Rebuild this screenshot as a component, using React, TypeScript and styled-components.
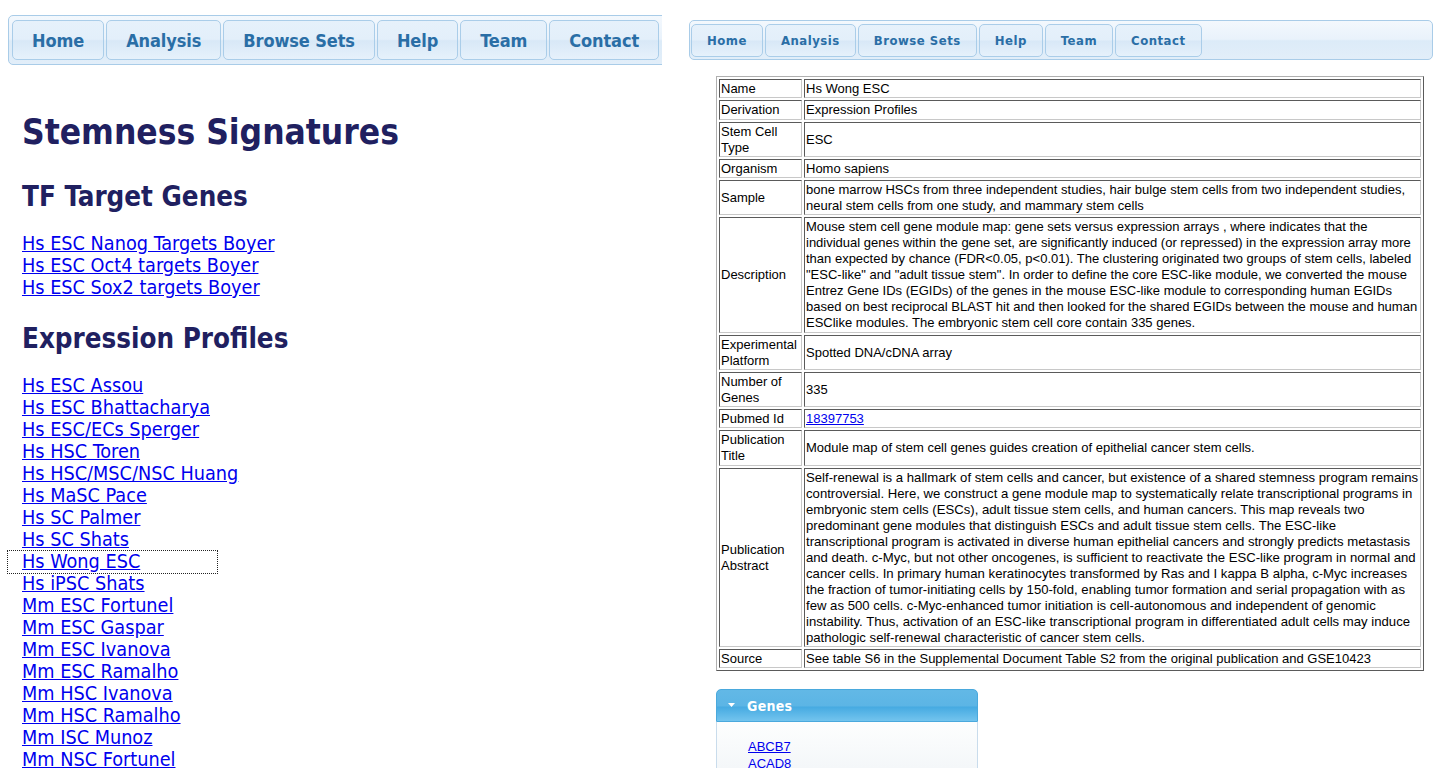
import React from "react";
import styled, { createGlobalStyle, css } from "styled-components";

const Global = createGlobalStyle`
  html, body { margin: 0; padding: 0; background: #fff; }
  body { overflow: hidden; }
`;

const Page = styled.div`
  display: flex;
  width: 1438px;
  height: 768px;
  overflow: hidden;
`;

const LeftPane = styled.div`
  width: 662px;
  flex: 0 0 662px;
  height: 768px;
  overflow: hidden;
  padding: 15px 0 0 8px;
  box-sizing: border-box;
  font-family: "DejaVu Sans Condensed", "DejaVu Sans", sans-serif;
  font-stretch: condensed;
`;

const RightPane = styled.div`
  flex: 1;
  height: 768px;
  overflow: hidden;
  padding: 20px 5px 0 8px;
  margin-left: 19px;
  box-sizing: border-box;
`;

const NavBar = styled.div<{ $size: "lg" | "sm" }>`
  display: flex;
  gap: 2px;
  box-sizing: border-box;
  border: 1px solid #a9cce8;
  border-radius: 5px;
  background: linear-gradient(#f3f8fd 0%, #e9f2fb 48%, #dcebf8 52%, #e2eef9 100%);
  ${(p) =>
    p.$size === "lg"
      ? css`
          width: 780px;
          height: 50px;
          padding: 4px 3px;
        `
      : css`
          width: 100%;
          height: 40px;
          padding: 3px 1px;
        `}
`;

const NavButton = styled.a<{ $size: "lg" | "sm" }>`
  display: flex;
  flex: 0 0 auto;
  align-items: center;
  justify-content: center;
  box-sizing: border-box;
  border: 1px solid #aacde9;
  border-radius: 5px;
  background: linear-gradient(#e6f1fb 0%, #e3effa 48%, #d8e8f7 52%, #e6f1fb 100%);
  color: #2a6ea6;
  font-family: "DejaVu Sans Condensed", "DejaVu Sans", sans-serif;
  font-stretch: condensed;
  font-weight: bold;
  text-decoration: none;
  white-space: nowrap;
  ${(p) =>
    p.$size === "lg"
      ? css`
          height: 40px;
          padding: 0 19px;
          font-size: 18px;
          letter-spacing: -0.1px;
        `
      : css`
          height: 33px;
          padding: 0 15px;
          font-size: 13px;
          letter-spacing: 0.5px;
        `}
`;

const Content = styled.div`
  padding-left: 14px;
`;

const Title = styled.h1`
  margin: 46px 0 0 0;
  font-size: 35px;
  line-height: 42px;
  font-weight: bold;
  color: #202060;
`;

const Section = styled.h2<{ $first?: boolean }>`
  margin: ${(p) => (p.$first ? "27px" : "23px")} 0 0 0;
  font-size: 27.5px;
  line-height: 32px;
  font-weight: bold;
  color: #202060;
`;

const LinkList = styled.div`
  margin-top: 21px;
  margin-left: -14px;
`;

const LinkRow = styled.div<{ $focused?: boolean }>`
  height: 22px;
  line-height: 22px;
  padding-left: 14px;
  box-sizing: border-box;
  ${(p) =>
    p.$focused &&
    css`
      width: 209px;
      outline: 1px dotted #222;
    `}
`;

const SetLink = styled.a`
  color: #0000ee;
  font-size: 19.7px;
  text-decoration: underline;
  white-space: nowrap;
`;

const InfoTable = styled.table`
  margin: 16px 0 0 27px;
  width: 708px;
  border-collapse: separate;
  border-spacing: 2px;
  border: 1px solid;
  border-color: #b0b0b0 #5a5a5a #5a5a5a #b0b0b0;
  font-family: "Liberation Sans", Arial, sans-serif;
  font-size: 13px;
  line-height: 16px;
  color: #000;
`;

const Cell = styled.td<{ $label?: boolean }>`
  padding: 1px 1px 0.25px 1px;
  border: 1px solid;
  border-color: #5a5a5a #c8c8c8 #c8c8c8 #5a5a5a;
  vertical-align: middle;
  text-align: left;
  ${(p) =>
    p.$label &&
    css`
      width: 79px;
    `}
`;

const AbstractText = styled.span`
  font-size: 13.15px;
`;

const PlainLink = styled.a`
  color: #0000ee;
  text-decoration: underline;
`;

const Panel = styled.div`
  margin: 18px 0 0 27px;
  width: 262px;
`;

const PanelHeader = styled.div`
  display: flex;
  align-items: center;
  gap: 12px;
  height: 33px;
  box-sizing: border-box;
  padding-left: 11px;
  border: 1px solid #4aa9dd;
  border-radius: 5px 5px 0 0;
  background: linear-gradient(#62b8e6 0%, #5cb5e5 50%, #47abe2 56%, #73c4ee 100%);
  color: #fff;
  font-family: "DejaVu Sans Condensed", "DejaVu Sans", sans-serif;
  font-stretch: condensed;
  font-weight: bold;
  font-size: 14px;
  letter-spacing: 0.3px;
`;

const PanelBody = styled.div`
  height: 60px;
  padding: 16px 0 0 31px;
  border: 1px solid #c9dcec;
  border-top: none;
  background: linear-gradient(#fdfefe 0%, #f4f7f9 60%, #e9eef2 100%);
  font-family: "Liberation Sans", Arial, sans-serif;
  font-size: 13px;
  line-height: 17px;
`;

const GeneLink = styled.a`
  display: block;
  width: max-content;
  color: #0000ee;
  text-decoration: underline;
`;

const navItems = ["Home", "Analysis", "Browse Sets", "Help", "Team", "Contact"];

const tfSets = ["Hs ESC Nanog Targets Boyer", "Hs ESC Oct4 targets Boyer", "Hs ESC Sox2 targets Boyer"];

const exprSets = [
  "Hs ESC Assou",
  "Hs ESC Bhattacharya",
  "Hs ESC/ECs Sperger",
  "Hs HSC Toren",
  "Hs HSC/MSC/NSC Huang",
  "Hs MaSC Pace",
  "Hs SC Palmer",
  "Hs SC Shats",
  "Hs Wong ESC",
  "Hs iPSC Shats",
  "Mm ESC Fortunel",
  "Mm ESC Gaspar",
  "Mm ESC Ivanova",
  "Mm ESC Ramalho",
  "Mm HSC Ivanova",
  "Mm HSC Ramalho",
  "Mm ISC Munoz",
  "Mm NSC Fortunel",
];

const rows: { label: string; value: React.ReactNode }[] = [
  { label: "Name", value: "Hs Wong ESC" },
  { label: "Derivation", value: "Expression Profiles" },
  { label: "Stem Cell Type", value: "ESC" },
  { label: "Organism", value: "Homo sapiens" },
  {
    label: "Sample",
    value:
      "bone marrow HSCs from three independent studies, hair bulge stem cells from two independent studies, neural stem cells from one study, and mammary stem cells",
  },
  {
    label: "Description",
    value:
      'Mouse stem cell gene module map: gene sets versus expression arrays , where indicates that the individual genes within the gene set, are significantly induced (or repressed) in the expression array more than expected by chance (FDR<0.05, p<0.01). The clustering originated two groups of stem cells, labeled "ESC-like" and "adult tissue stem". In order to define the core ESC-like module, we converted the mouse Entrez Gene IDs (EGIDs) of the genes in the mouse ESC-like module to corresponding human EGIDs based on best reciprocal BLAST hit and then looked for the shared EGIDs between the mouse and human ESClike modules. The embryonic stem cell core contain 335 genes.',
  },
  { label: "Experimental Platform", value: "Spotted DNA/cDNA array" },
  { label: "Number of Genes", value: "335" },
  { label: "Pubmed Id", value: <PlainLink href="#">18397753</PlainLink> },
  { label: "Publication Title", value: "Module map of stem cell genes guides creation of epithelial cancer stem cells." },
  {
    label: "Publication Abstract",
    value: (
      <AbstractText>
        Self-renewal is a hallmark of stem cells and cancer, but existence of a shared stemness program remains
        controversial. Here, we construct a gene module map to systematically relate transcriptional programs in
        embryonic stem cells (ESCs), adult tissue stem cells, and human cancers. This map reveals two predominant gene
        modules that distinguish ESCs and adult tissue stem cells. The ESC-like transcriptional program is activated
        in diverse human epithelial cancers and strongly predicts metastasis and death. c-Myc, but not other
        oncogenes, is sufficient to reactivate the ESC-like program in normal and cancer cells. In primary human
        keratinocytes transformed by Ras and I kappa B alpha, c-Myc increases the fraction of tumor-initiating cells
        by 150-fold, enabling tumor formation and serial propagation with as few as 500 cells. c-Myc-enhanced tumor
        initiation is cell-autonomous and independent of genomic instability. Thus, activation of an ESC-like
        transcriptional program in differentiated adult cells may induce pathologic self-renewal characteristic of
        cancer stem cells.
      </AbstractText>
    ),
  },
  {
    label: "Source",
    value: "See table S6 in the Supplemental Document Table S2 from the original publication and GSE10423",
  },
];

function Nav({ size }: { size: "lg" | "sm" }) {
  return (
    <NavBar $size={size}>
      {navItems.map((n) => (
        <NavButton key={n} href="#" $size={size}>
          {n}
        </NavButton>
      ))}
    </NavBar>
  );
}

export default function App() {
  return (
    <Page>
      <Global />
      <LeftPane>
        <Nav size="lg" />
        <Content>
          <Title>Stemness Signatures</Title>
          <Section $first>TF Target Genes</Section>
          <LinkList>
            {tfSets.map((s) => (
              <LinkRow key={s}>
                <SetLink href="#">{s}</SetLink>
              </LinkRow>
            ))}
          </LinkList>
          <Section>Expression Profiles</Section>
          <LinkList>
            {exprSets.map((s) => (
              <LinkRow key={s} $focused={s === "Hs Wong ESC"}>
                <SetLink href="#">{s}</SetLink>
              </LinkRow>
            ))}
          </LinkList>
        </Content>
      </LeftPane>
      <RightPane>
        <Nav size="sm" />
        <InfoTable>
          <tbody>
            {rows.map((r) => (
              <tr key={r.label}>
                <Cell $label>{r.label}</Cell>
                <Cell>{r.value}</Cell>
              </tr>
            ))}
          </tbody>
        </InfoTable>
        <Panel>
          <PanelHeader>
            <svg width="7" height="5" viewBox="0 0 7 5">
              <path d="M0 0 L7 0 L3.5 4 Z" fill="#fff" />
            </svg>
            Genes
          </PanelHeader>
          <PanelBody>
            <GeneLink href="#">ABCB7</GeneLink>
            <GeneLink href="#">ACAD8</GeneLink>
          </PanelBody>
        </Panel>
      </RightPane>
    </Page>
  );
}
